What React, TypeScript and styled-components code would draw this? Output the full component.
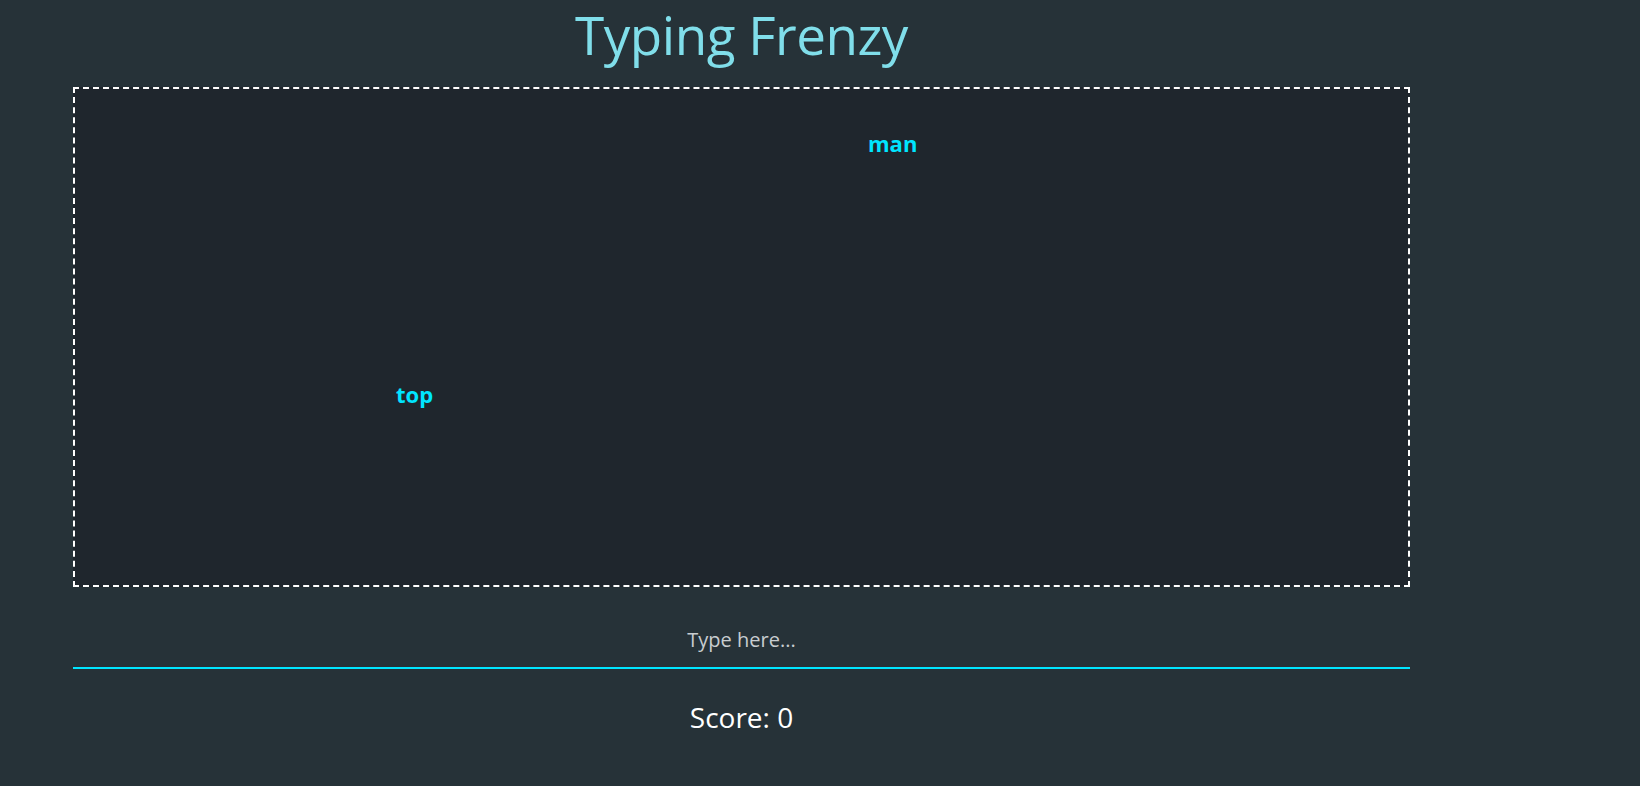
import React from "react";
import styled, { createGlobalStyle } from "styled-components";

const GlobalStyle = createGlobalStyle`
  html, body {
    margin: 0;
    padding: 0;
    background: #263238;
    font-family: "Open Sans", "Noto Sans", sans-serif;
  }
`;

const Page = styled.div`
  display: flex;
  flex-direction: column;
  width: 1337px;
  margin-left: 73px;
`;

const Title = styled.h1`
  margin: 0;
  height: 87px;
  text-align: center;
  font-size: 53px;
  font-weight: 400;
  line-height: 70px;
  color: #80deea;
  letter-spacing: -0.5px;
`;

const GameArea = styled.div`
  position: relative;
  box-sizing: border-box;
  height: 500px;
  border: 2px dashed #ffffff;
  background: #1f262d;
`;

const Word = styled.span`
  position: absolute;
  font-size: 22px;
  line-height: 30px;
  font-weight: 700;
  color: #00e5ff;
`;

const TypeInput = styled.input`
  box-sizing: border-box;
  margin-top: 21px;
  width: 100%;
  height: 61px;
  padding: 12px 10px 8px;
  background: transparent;
  border: none;
  border-bottom: 2px solid #00e5ff;
  outline: none;
  text-align: center;
  font-family: "Open Sans", "Noto Sans", sans-serif;
  font-size: 20px;
  color: #ffffff;
  &::placeholder {
    color: #c8cdd0;
  }
`;

const Score = styled.div`
  margin-top: 30px;
  text-align: center;
  color: #ffffff;
  font-size: 28px;
  line-height: 36px;
`;

const words = [
  { text: "man", x: 793, y: 39 },
  { text: "top", x: 321, y: 290 },
];

export default function App() {
  return (
    <>
      <GlobalStyle />
      <Page>
        <Title>Typing Frenzy</Title>
        <GameArea>
          {words.map((w) => (
            <Word key={w.text} style={{ left: w.x, top: w.y }}>
              {w.text}
            </Word>
          ))}
        </GameArea>
        <TypeInput placeholder="Type here..." />
        <Score>Score: 0</Score>
      </Page>
    </>
  );
}
